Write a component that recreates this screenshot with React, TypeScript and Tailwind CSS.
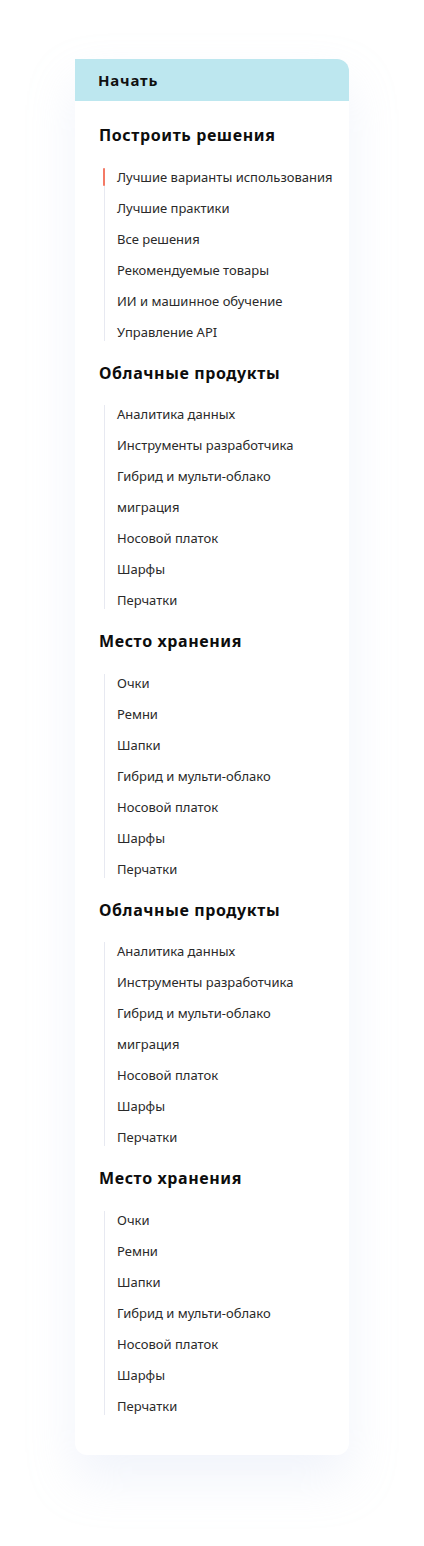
import React from "react";

type Section = { title: string; items: string[]; active?: number };

const sections: Section[] = [
  {
    title: "Построить решения",
    items: [
      "Лучшие варианты использования",
      "Лучшие практики",
      "Все решения",
      "Рекомендуемые товары",
      "ИИ и машинное обучение",
      "Управление API",
    ],
    active: 0,
  },
  {
    title: "Облачные продукты",
    items: [
      "Аналитика данных",
      "Инструменты разработчика",
      "Гибрид и мульти-облако",
      "миграция",
      "Носовой платок",
      "Шарфы",
      "Перчатки",
    ],
  },
  {
    title: "Место хранения",
    items: [
      "Очки",
      "Ремни",
      "Шапки",
      "Гибрид и мульти-облако",
      "Носовой платок",
      "Шарфы",
      "Перчатки",
    ],
  },
  {
    title: "Облачные продукты",
    items: [
      "Аналитика данных",
      "Инструменты разработчика",
      "Гибрид и мульти-облако",
      "миграция",
      "Носовой платок",
      "Шарфы",
      "Перчатки",
    ],
  },
  {
    title: "Место хранения",
    items: [
      "Очки",
      "Ремни",
      "Шапки",
      "Гибрид и мульти-облако",
      "Носовой платок",
      "Шарфы",
      "Перчатки",
    ],
  },
];

export default function App() {
  return (
    <div className="min-h-[1546px] bg-white pt-[59px] pl-[75px] font-['Noto_Sans',sans-serif]">
      <div className="w-[274px] rounded-tr-[12px] rounded-b-[12px] bg-white shadow-[0_24px_48px_rgba(200,210,240,0.25)]">
        <div className="flex h-[42px] items-center rounded-tr-[12px] bg-[#bde7ef] pl-[23px] text-[15px] font-bold tracking-[0.8px] text-[#111]">
          Начать
        </div>
        <div className="flex flex-col gap-[22px] px-[24px] pt-[24px] pb-[40px]">
          {sections.map((s, si) => (
            <div key={si} className="flex flex-col">
              <div className="mb-[22.5px] text-[16px] leading-[20px] font-bold tracking-[0.6px] whitespace-nowrap text-[#0d0d0d]">
                {s.title}
              </div>
              <ul className="ml-[5px] flex flex-col gap-[13px] border-l border-[#e7e9f1]">
                {s.items.map((it, i) => (
                  <li
                    key={i}
                    className="relative pl-[12px] text-[13px] leading-[18px] whitespace-nowrap text-[#2a2a2a]"
                  >
                    {s.active === i && (
                      <span className="absolute top-0 left-[-2px] h-[18px] w-[2px] rounded bg-[#f47a66]" />
                    )}
                    {it}
                  </li>
                ))}
              </ul>
            </div>
          ))}
        </div>
      </div>
    </div>
  );
}
